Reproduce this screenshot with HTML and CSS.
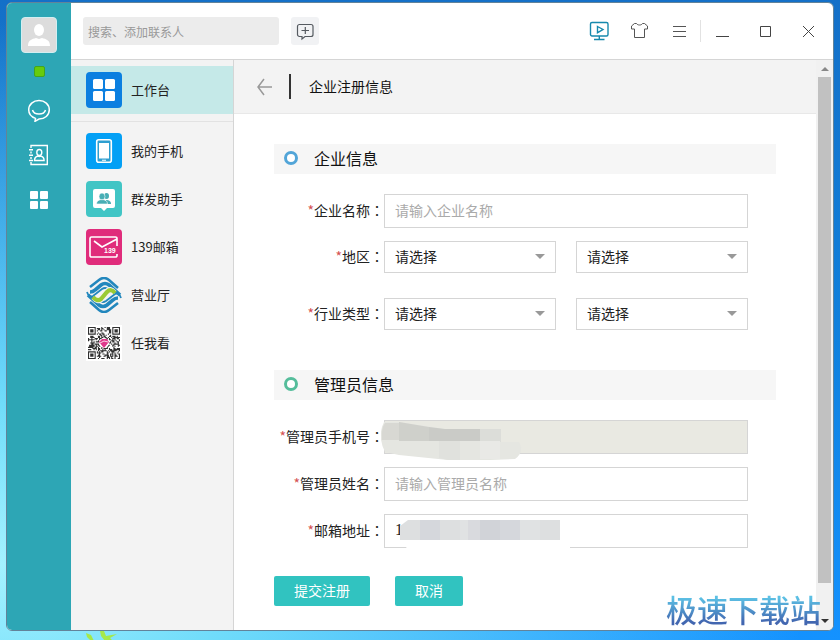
FILE: index.html
```html
<!DOCTYPE html>
<html lang="zh-CN">
<head>
<meta charset="utf-8">
<title>企业注册信息</title>
<link rel="stylesheet" href="styles.css">
</head>
<body>
<svg class="leaves" width="60" height="10" viewBox="0 0 60 10" aria-hidden="true"><g fill="#a5e84a"><path d="M0 2l5 2 3 6H5L1 6z"/><path d="M14 0h4l2 5 11-2-7 4 3 3h-8l-4-5z"/></g></svg>
<div class="window">
  <nav class="rail" aria-label="主导航">
    <button class="avatar" aria-label="头像"><svg width="36" height="36" viewBox="0 0 36 36"><ellipse cx="18" cy="13" rx="5" ry="6" fill="#fff"/><path d="M7 29c0-6 4-7 8-8l3 1 3-1c4 1 8 2 8 8z" fill="#fff"/></svg></button>
    <span class="status"></span>
    <button class="rail-button" aria-label="消息"><svg width="24" height="24" viewBox="0 0 24 24" fill="none" stroke="#fff" stroke-width="1.5"><path d="M8.500 20.400C4.500 19 1.700 15.800 1.700 11.800 1.700 6.300 6.300 2.500 12 2.500s10.300 3.800 10.300 9.300-4.600 9.300-10.300 9.300L8 23.300z"/><path d="M5.500 12c1.500 5.400 11.500 5.400 13 0"/></svg></button>
    <button class="rail-button" aria-label="通讯录"><svg width="24" height="24" viewBox="0 0 24 24" fill="none" stroke="#fff" stroke-width="1.400"><path d="M4 5V2.500h16.300v19H4V19M4 8.500v2M4 14v2M2 6.700h4M2 12.200h4M2 17.500h4"/><ellipse cx="12.300" cy="9.500" rx="2.500" ry="3"/><path d="M7.500 17.500c0-3 1.500-4 3.500-4.500l1.300.5 1.300-.5c2 .5 3.500 1.500 3.500 4.500z"/></svg></button>
    <button class="rail-button" aria-label="应用"><svg width="24" height="24" viewBox="0 0 24 24" fill="#fff"><rect x="3" y="3" width="8" height="8" rx="1"/><rect x="13" y="3" width="8" height="8" rx="1"/><rect x="3" y="13" width="8" height="8" rx="1"/><rect x="13" y="13" width="8" height="8" rx="1"/></svg></button>
  </nav>
  <div class="workspace">
    <header class="topbar">
      <input class="search" type="search" placeholder="搜索、添加联系人" aria-label="搜索、添加联系人">
      <button class="new-chat" aria-label="新建会话"><svg width="28" height="28" viewBox="0 0 28 28" fill="none" stroke="#555a60" stroke-width="1.200"><path d="M11 19.500H8.500a2 2 0 0 1-2-2v-8a2 2 0 0 1 2-2h11.500a2 2 0 0 1 2 2v8a2 2 0 0 1-2 2h-6L11 22zM10.500 13.500h7.500M14.300 10v7"/></svg></button>
      <div class="tools">
        <button aria-label="直播"><svg width="22" height="22" viewBox="0 0 22 22" fill="none" stroke="#1689ad" stroke-width="1.400"><rect x="1.500" y="2.500" width="17.500" height="13.500" rx="1.500"/><path d="M8.500 6.500l5.500 3-5.500 3.200zM10.300 16v3M5 19.500h10.500"/></svg></button>
        <button aria-label="皮肤"><svg width="22" height="22" viewBox="0 0 22 22" fill="none" stroke="#555" stroke-width="1"><path d="M5.500 3.500h2c1 2 5 2 6 0h2L18.500 6v3h-3v8.500h-10V9h-3V6z" stroke-linejoin="round"/></svg></button>
        <button aria-label="菜单"><svg width="22" height="22" viewBox="0 0 22 22" stroke="#555"><path d="M4 6.500h13M4 11.500h13M4 16.500h13"/></svg></button>
      </div>
      <div class="window-controls">
        <button aria-label="最小化"><svg width="22" height="22" viewBox="0 0 22 22" stroke="#444"><path d="M4 16.500h13"/></svg></button>
        <button aria-label="最大化"><svg width="22" height="22" viewBox="0 0 22 22" fill="none" stroke="#444"><path d="M5.500 6.500h10v10h-10z"/></svg></button>
        <button aria-label="关闭"><svg width="22" height="22" viewBox="0 0 22 22" stroke="#444"><path d="M5 6l11 11M16 6L5 17"/></svg></button>
      </div>
    </header>
    <div class="panes">
      <aside class="apps">
        <a class="app app-current" href="#"><svg width="36" height="36" viewBox="0 0 36 36"><rect width="36" height="36" rx="4" fill="#0b7fe0"/><g fill="#fff"><rect x="7" y="7" width="10" height="10" rx="1.500"/><rect x="19" y="7" width="10" height="10" rx="1.500"/><rect x="7" y="19" width="10" height="10" rx="1.500"/><rect x="19" y="19" width="10" height="10" rx="1.500"/></g></svg>工作台</a>
        <div class="app-list">
          <a class="app" href="#"><svg width="36" height="36" viewBox="0 0 36 36"><rect width="36" height="36" rx="4" fill="#03a0f5"/><rect x="10.700" y="6.700" width="14.600" height="22.600" rx="2" fill="#2f9fd0" stroke="#fff" stroke-width="1.600"/><path d="M13 10h10v15.500H13zM16 26.700h4v1h-4z" fill="#fff"/></svg>我的手机</a>
          <a class="app" href="#"><svg width="36" height="36" viewBox="0 0 36 36"><rect width="36" height="36" rx="4" fill="#41c5c5"/><path d="M9 8h18a2 2 0 0 1 2 2v15a2 2 0 0 1-2 2h-6l-3 3-3-3H9a2 2 0 0 1-2-2V10a2 2 0 0 1 2-2z" fill="#fff"/><g fill="#48aeb5"><ellipse cx="20.500" cy="15" rx="2.500" ry="3"/><path d="M20 19c3 0 5 1 5 4h-5z"/></g><g fill="#48aeb5" stroke="#fff" stroke-width=".6"><ellipse cx="16" cy="15.500" rx="3" ry="3.500"/><path d="M10.500 23c0-3 2-4 4-4.300h3c2 .3 4 1.300 4 4.300z"/></g></svg>群发助手</a>
          <a class="app" href="#"><svg width="36" height="36" viewBox="0 0 36 36"><rect width="36" height="36" rx="4" fill="#e02c7b"/><path d="M31 17V9.500a1.500 1.500 0 0 0-1.500-1.500h-24A1.500 1.500 0 0 0 4 9.500v17A1.500 1.500 0 0 0 5.500 28H29.500a1.500 1.500 0 0 0 1.500-1.500V25M8 12l8 6L31 10" fill="none" stroke="#fff" stroke-width="1.600"/><text x="18" y="24" class="mail-mark">139</text></svg>139邮箱</a>
          <a class="app" href="#"><svg width="36" height="36" viewBox="0 0 36 36" fill="none"><defs><g id="bands" stroke="#2287bd"><path d="M4 10L13 3Q18-1 23 3L32 11" stroke-width="2.600"/><path d="M4 15Q7 15 9 13L15 8Q19 5 23 8L34 18" stroke-width="3.600"/><path d="M1 15Q3 21 7 19L16 12Q19 10 22 12" stroke-width="1.800"/></g></defs><use href="#bands"/><use href="#bands" transform="rotate(180 18 18)"/><path d="M8 20Q12 25 15 22L21 15Q24 11 28 16" stroke="#f3f3f3" stroke-width="6.400"/><path d="M7 20Q11 25 15 22L21 15Q25 11 29 16" stroke="#9aca35" stroke-width="4.200"/></svg>营业厅</a>
          <a class="app" href="#"><svg width="36" height="36" viewBox="0 0 36 36"><rect width="36" height="36" fill="#fff"/><path id="qr-modules" fill="#303030"/><circle cx="18" cy="18" r="5" fill="#fff"/><path d="M13 17l3-3h5l2 3-5 6z" fill="#df388c"/><path d="M14 18l4-2 4 1" fill="none" stroke="#fff" stroke-width=".8"/></svg>任我看</a>
        </div>
      </aside>
      <main class="content">
        <div class="page-header">
          <button class="back" aria-label="返回"><svg width="18" height="20" viewBox="0 0 18 20" fill="none" stroke="#999" stroke-width="1.500"><path d="M8 2L2 10l6 8M2 10h14"/></svg></button>
          <h1>企业注册信息</h1>
        </div>
        <form class="form">
          <h2 class="section section-company">企业信息</h2>
          <div class="fields">
            <div class="row"><label for="company"><i>*</i>企业名称<b lang="zh-TW">：</b></label><input id="company" type="text" placeholder="请输入企业名称"></div>
            <div class="row row-select"><label for="province"><i>*</i>地区<b lang="zh-TW">：</b></label><span class="pick"><select id="province"><option>请选择</option></select></span><span class="pick"><select aria-label="城市"><option>请选择</option></select></span></div>
            <div class="row"><label for="industry"><i>*</i>行业类型<b lang="zh-TW">：</b></label><span class="pick"><select id="industry"><option>请选择</option></select></span><span class="pick"><select aria-label="行业子类"><option>请选择</option></select></span></div>
          </div>
          <h2 class="section section-admin">管理员信息</h2>
          <div class="fields">
            <div class="row"><label for="phone"><i>*</i>管理员手机号<b lang="zh-TW">：</b></label><span class="masked"><input id="phone" type="text" disabled><svg class="mask mask-phone" width="142" height="42" viewBox="0 0 142 42" aria-hidden="true"><path d="M3 2h15l46 7h56v13h18q6 10-4 17l-25 1H67L18 35 4 32Q-4 16 3 2z" fill="#e5e6e1"/><path d="M4 3h14v17H1Q0 8 4 3z" fill="#d8d8d3"/><path d="M18 2l30 5v14H18z" fill="#cfd0cb"/><path d="M48 7l16 2h35v12H48z" fill="#cacbc7"/><path d="M99 9h21v13H99z" fill="#dcddd9"/><path d="M58 21h21v19H67l-9-2z" fill="#e0e1dd"/><path d="M99 21h20v18H99z" fill="#e9e9e6"/></svg></span></div>
            <div class="row"><label for="admin"><i>*</i>管理员姓名<b lang="zh-TW">：</b></label><input id="admin" type="text" placeholder="请输入管理员名称"></div>
            <div class="row"><label for="email"><i>*</i>邮箱地址<b lang="zh-TW">：</b></label><span class="masked"><input class="typed" id="email" type="text" value="1"><svg class="mask mask-email" width="170" height="32" viewBox="0 0 170 32" aria-hidden="true"><path d="M0 20h170v12H8z" fill="#fff"/><path d="M0 8l8-6h152v20H0z" fill="#dddfe0"/><path d="M20 2h20v20H20zM100 2h20v20h-20z" fill="#d5d7dc"/><path d="M60 2h8v20h-8zM120 2h20v20h-20z" fill="#e0e2e3"/><path d="M68 2h12v20H68z" fill="#d9dade"/><path d="M80 2h20v20H80z" fill="#d1d3d8"/></svg></span></div>
          </div>
          <div class="actions"><button type="submit">提交注册</button><button type="button">取消</button></div>
        </form>
      </main>
      <div class="scrollbar" aria-hidden="true"><span class="arrow-up"></span><span class="thumb"></span><span class="track"></span><span class="arrow-down"></span></div>
    </div>
  </div>
</div>
<div class="watermark">极速下载站</div>
<script src="qr.js"></script>
</body>
</html>
```
FILE: styles.css
```css
*, ::before, ::after { box-sizing: border-box; }

body {
  margin: 0;
  min-height: 100vh;
  padding: 2px 6px 10px;
  display: flex;
  position: relative;
  font: 14px/20px "Noto Sans CJK SC", sans-serif;
  color: #222;
  background:
    radial-gradient(ellipse at 0 88%, #a4f2ff 0, #70dcfa 20%, rgba(40, 165, 245, 0) 68%),
    linear-gradient(#1470c8, #1080dc 50%, #1492ff);
}

button, input, select { font: inherit; color: inherit; }
button { padding: 0; border: 0; background: none; display: flex; align-items: center; justify-content: center; }
svg { display: block; flex: none; }

.leaves { position: absolute; left: 86px; bottom: 0; }

.window {
  flex: 1;
  display: flex;
  border: 1px solid #62839a;
  border-radius: 6px;
  overflow: hidden;
  background: #fff;
}

.rail {
  width: 64px;
  flex: none;
  padding-top: 14px;
  display: flex;
  flex-direction: column;
  align-items: center;
  background: #2da6b5;
}
.avatar { width: 36px; height: 36px; border-radius: 4px; background: #dcdcdc; border: 1px solid #d3eef1; }
.status { width: 11px; height: 11px; margin: 13px 0 10px; border: 1px solid #42a51e; border-radius: 2px; background: #66cc0c; }
.rail-button { width: 44px; height: 45px; }

.workspace { flex: 1; min-width: 0; display: flex; flex-direction: column; }

.topbar {
  height: 57px;
  flex: none;
  padding: 0 13px 0 12px;
  display: flex;
  align-items: center;
  border-bottom: 1px solid #d5d5d5;
}
.search {
  width: 196px;
  height: 28px;
  padding: 0 5px;
  border: 0;
  border-radius: 3px;
  background: #ececec;
  font-size: 12px;
}
.search::placeholder { color: #999; opacity: 1; }
.new-chat { width: 28px; height: 28px; margin-left: 12px; border-radius: 3px; background: #f1f2f4; }
.tools { margin-left: auto; padding-right: 9px; display: flex; gap: 18px; border-right: 1px solid #e2e2e2; }
.window-controls { margin-left: 11px; display: flex; gap: 21px; }

.panes { flex: 1; display: flex; min-height: 0; }

.apps { width: 163px; flex: none; padding-top: 6px; background: #f3f3f3; border-right: 1px solid #d5d5d5; font-size: 13px; }
.app { height: 48px; padding-left: 15px; display: flex; align-items: center; gap: 9px; color: #222; text-decoration: none; }
.app-current { background: #c5e9e8; }
.app-list { margin-top: 7px; padding-top: 5px; border-top: 1px solid #e2e2e2; }
.mail-mark { font: bold 7px "Liberation Sans", sans-serif; fill: #fff; }

.content { flex: 1; min-width: 0; }
.page-header { height: 54px; padding-left: 22px; display: flex; align-items: center; background: #f3f3f3; border-bottom: 1px solid #e8e8e8; }
h1, h2 { margin: 0; font-weight: 400; color: #111; }
h1 { margin-left: 15px; padding-left: 18px; border-left: 2px solid #333; font-size: 14px; line-height: 25px; }

.form { padding: 30px 40px 24px; }
.section { height: 30px; padding: 0 0 2px 10px; display: flex; align-items: center; gap: 16px; background: #f6f6f6; font-size: 16px; }
.section::before { content: ""; width: 14px; height: 14px; border: 3px solid #52a5d8; border-radius: 50%; background: #fff; }
.section-admin::before { border-color: #55bd9b; }
.section-admin { margin-top: 40px; }
.fields { margin-top: 20px; padding-right: 28px; display: flex; flex-direction: column; gap: 13px; }
.row { display: flex; align-items: center; }
.row-select { margin-bottom: 12px; }
.row label { width: 110px; flex: none; padding-bottom: 3px; text-align: right; white-space: nowrap; }
.row i { font-style: normal; color: #d45252; }
.row b { font-family: "Noto Sans CJK TC", sans-serif; font-weight: 400; }
.row input { flex: 1; min-width: 0; width: 100%; height: 34px; padding: 0 10px 2px; border: 1px solid #d5d5d5; background: #fff; }
.row input::placeholder { color: #aaa; opacity: 1; }
.row input:disabled { background: #e9e9e2; }
.row .typed { font-family: "Liberation Serif", serif; font-size: 16px; }

.pick { flex: 1; position: relative; }
.pick + .pick { margin-left: 20px; }
.pick select { display: block; width: 100%; height: 32px; padding: 0 10px 2px; border: 1px solid #d5d5d5; border-radius: 0; background: #fff; appearance: none; }
.pick::after { content: ""; position: absolute; right: 11px; top: 13px; border: 5px solid transparent; border-top-color: #999; border-bottom: 0; pointer-events: none; }

.masked { flex: 1; position: relative; display: flex; }
.mask { position: absolute; }
.mask-phone { left: -3px; top: 0; }
.mask-email { left: 16px; top: 4px; }

.actions { margin-top: 28px; display: flex; gap: 25px; }
.actions button { height: 30px; padding: 0 20px 2px; border-radius: 2px; background: #31c3c0; color: #fff; }

.scrollbar { width: 17px; flex: none; padding: 7px 2px; display: flex; flex-direction: column; align-items: center; background: #f1f1f1; }
.arrow-up { margin-bottom: 6px; border: 4px solid transparent; border-top: 0; border-bottom-color: #888; }
.thumb { flex: 14; width: 100%; background: #c1c1c1; }
.track { flex: 1; }
.arrow-down { border: 4px solid transparent; border-bottom: 0; border-top-color: #333; }

.watermark {
  position: absolute;
  right: 19px;
  bottom: 10px;
  font-size: 31px;
  font-weight: 500;
  line-height: 44px;
  color: transparent;
  background: linear-gradient(#5cc0e4 25%, #4266b0 80%);
  background-clip: text;
}
```
FILE: qr.js
```js
// Fills the small QR tile: 29 modules a side, with three finder squares.
const side = 29;
const unit = 32 / side;
let seed = 139;
function nextBit() {
  seed = (seed * 1103515245 + 12345) % 2147483648;
  return seed / 2147483648 < 0.52;
}
function finder(x, y) {
  const ring = Math.max(Math.abs(x - 3), Math.abs(y - 3));
  return ring > 3 ? 0 : ring === 2 ? 0 : 1;
}
let d = "";
for (let y = 0; y < side; y++) {
  for (let x = 0; x < side; x++) {
    let on = nextBit();
    if (x < 8 && y < 8) on = finder(x, y);
    else if (x > 20 && y < 8) on = finder(x - 22, y);
    else if (x < 8 && y > 20) on = finder(x, y - 22);
    if (on) d += `M${2 + x * unit} ${2 + y * unit}h${unit}v${unit}h${-unit}z`;
  }
}
document.getElementById("qr-modules").setAttribute("d", d);
```
